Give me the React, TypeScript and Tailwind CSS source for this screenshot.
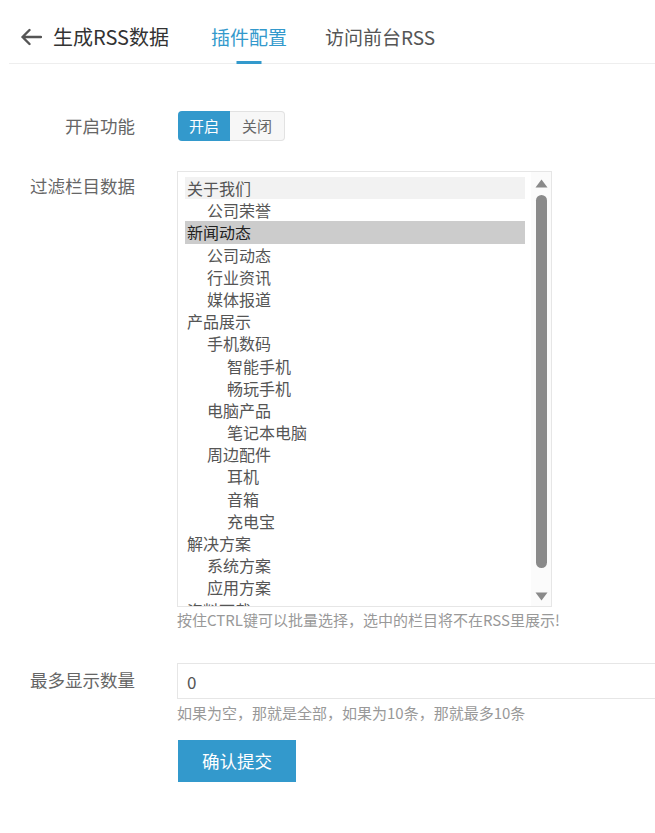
import React from 'react';

type Column = { name: string; level: number };

const columns: Column[] = [
  { name: '关于我们', level: 0 },
  { name: '公司荣誉', level: 1 },
  { name: '新闻动态', level: 0 },
  { name: '公司动态', level: 1 },
  { name: '行业资讯', level: 1 },
  { name: '媒体报道', level: 1 },
  { name: '产品展示', level: 0 },
  { name: '手机数码', level: 1 },
  { name: '智能手机', level: 2 },
  { name: '畅玩手机', level: 2 },
  { name: '电脑产品', level: 1 },
  { name: '笔记本电脑', level: 2 },
  { name: '周边配件', level: 1 },
  { name: '耳机', level: 2 },
  { name: '音箱', level: 2 },
  { name: '充电宝', level: 2 },
  { name: '解决方案', level: 0 },
  { name: '系统方案', level: 1 },
  { name: '应用方案', level: 1 },
  { name: '资料下载', level: 0 },
];

const indent = ['pl-[2px]', 'pl-[22px]', 'pl-[42px]'];

function BackArrow() {
  return (
    <svg width="22" height="18" viewBox="0 0 22 18" fill="none" aria-hidden="true">
      <path d="M21 9H2.5M9.5 2L2.5 9l7 7" stroke="#555" strokeWidth="2.4" strokeLinecap="round" strokeLinejoin="round" />
    </svg>
  );
}

function FormRow({ label, children, align = 'start' }: { label: string; children: React.ReactNode; align?: 'start' | 'center' }) {
  return (
    <div className={align === 'center' ? 'flex items-center' : 'flex items-start'}>
      <div className="w-[135px] shrink-0 text-right text-[17.5px] leading-[30px] text-[#666]">{label}</div>
      <div className="ml-[42px] flex-1 min-w-0">{children}</div>
    </div>
  );
}

export default function App() {
  return (
    <div className="min-h-[833px] w-full overflow-hidden bg-white font-['Noto_Sans_CJK_SC','Noto_Sans',sans-serif]">
      {/* Header */}
      <header className="ml-[9px] flex h-[64px] items-stretch border-b border-[#eeeeee] pt-[11px]">
        <button className="ml-[11px] flex items-center" aria-label="返回">
          <BackArrow />
        </button>
        <h1 className="ml-[11px] flex items-center text-[20px] leading-[28px] text-[#333]">生成RSS数据</h1>
        <nav className="ml-[23px] flex items-stretch">
          <a className="relative flex items-center px-[19px] text-[19px] text-[#3399cc]">
            插件配置
            <span className="absolute bottom-[-1px] left-1/2 h-[3px] w-[25px] -translate-x-1/2 bg-[#3399cc]" />
          </a>
          <a className="flex items-center px-[19px] text-[19px] text-[#555]">访问前台RSS</a>
        </nav>
      </header>

      <div className="mt-[47px] flex flex-col">
        {/* 开启功能 */}
        <FormRow label="开启功能" align="center">
          <div className="flex h-[30px] ml-[1px]">
            <span className="flex items-center rounded-l-[4px] bg-[#3399cc] px-[11px] text-[15px] text-white">开启</span>
            <span className="flex items-center rounded-r-[4px] border border-l-0 border-[#e2e2e2] bg-[#f7f7f7] px-[12px] text-[15px] text-[#666]">关闭</span>
          </div>
        </FormRow>

        {/* 过滤栏目数据 */}
        <div className="mt-[30px]">
          <FormRow label="过滤栏目数据">
            <div className="flex h-[436px] w-[375px] border border-[#e6e6e6]">
              <div className="flex-1 overflow-hidden pt-[5px] pl-[7px] pr-[6px]">
                {columns.map((c, i) => (
                  <div
                    key={c.name}
                    className={
                      'h-[22.2px] whitespace-nowrap text-[16px] leading-[22.2px] ' +
                      indent[c.level] +
                      (i === 0 ? ' bg-[#f2f2f2] text-[#555]' : i === 2 ? ' bg-[#cccccc] text-[#222]' : ' text-[#555]')
                    }
                  >
                    {c.name}
                  </div>
                ))}
              </div>
              <div className="flex w-[20px] shrink-0 flex-col items-center bg-[#fbfbfb] pt-[7px] pb-[5px]">
                <svg width="13" height="9" viewBox="0 0 13 9" aria-hidden="true">
                  <path d="M6.5 0.5L12.5 8.5H0.5Z" fill="#8a8a8a" />
                </svg>
                <div className="mt-[7px] h-[373px] w-[11px] rounded-full bg-[#8a8a8a]" />
                <div className="flex-1" />
                <svg width="13" height="9" viewBox="0 0 13 9" aria-hidden="true">
                  <path d="M0.5 0.5H12.5L6.5 8.5Z" fill="#8a8a8a" />
                </svg>
              </div>
            </div>
            <p className="mt-[3px] text-[15px] leading-[20px] text-[#999]">按住CTRL键可以批量选择，选中的栏目将不在RSS里展示!</p>
          </FormRow>
        </div>

        {/* 最多显示数量 */}
        <div className="mt-[33px]">
          <div className="flex items-start">
            <div className="w-[135px] shrink-0 pt-[2px] text-right text-[17.5px] leading-[30px] text-[#666]">最多显示数量</div>
            <div className="ml-[42px] flex-1 min-w-0">
              <input
                defaultValue="0"
                className="h-[36px] w-[520px] border border-[#e6e6e6] px-[9px] text-[17px] text-[#555] outline-none"
              />
              <p className="mt-[4px] text-[15px] leading-[20px] text-[#999]">如果为空，那就是全部，如果为10条，那就最多10条</p>
              <button className="mt-[17px] ml-[1px] h-[42px] w-[118px] bg-[#3399cc] text-[17.5px] text-white">确认提交</button>
            </div>
          </div>
        </div>
      </div>
    </div>
  );
}
